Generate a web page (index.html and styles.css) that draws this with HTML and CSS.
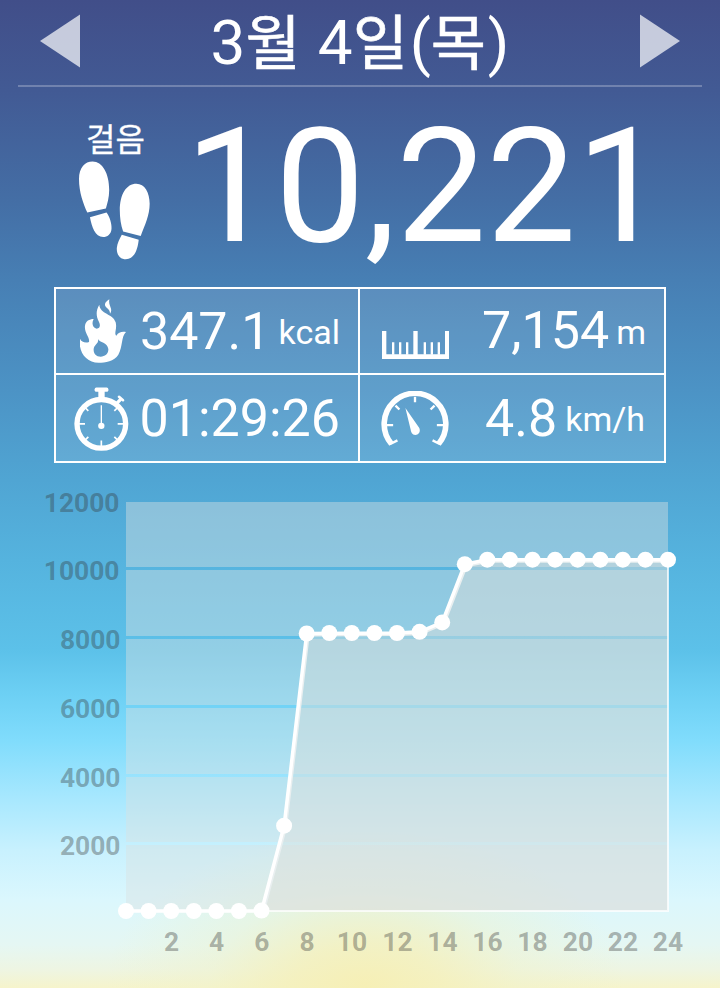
FILE: index.html
```
<!DOCTYPE html>
<html lang="ko">
<head>
  <meta charset="UTF-8">
  <meta name="viewport" content="width=device-width, initial-scale=1.0">
  <title>만보기</title>
  <link rel="stylesheet" href="styles.css">
</head>
<body>
  <div class="header">
    <svg class="arrow" viewBox="0 0 40 54"><path d="M40 0.5 L0 27 L40 53.5 Z"/></svg>
    <h1>3<span>월</span> 4<span>일</span>(<span>목</span>)</h1>
    <svg class="arrow" viewBox="0 0 40 54"><path d="M0 0.5 L40 27 L0 53.5 Z"/></svg>
  </div>

  <div class="steps">
    <div class="steps-label">
      <span>걸음</span>
      <svg class="feet" viewBox="57 152 214 296">
        <path d="M98 152 C127 152 148 187 148 238 C148 262 142 280 138 294 L82 306 C70 280 57 245 57 205 C57 170 75 152 98 152 Z"/>
        <path d="M90 320 L140 306 C150 320 156 340 155 355 C154 372 142 380 130 380 C105 378 96 350 90 320 Z"/>
        <path d="M230 219 C255 219 270 245 270 280 C270 315 255 345 243 377 L190 363 C183 345 180 320 180 300 C180 250 200 219 230 219 Z"/>
        <path d="M186 373 L237 388 C234 414 226 446 198 447 C178 447 170 430 171 413 C172 398 180 385 186 373 Z"/>
      </svg>
    </div>
    <div class="steps-count">10,221</div>
  </div>

  <div class="stats">
    <div class="stat">
      <svg class="icon flame" viewBox="90 58 138 192">
        <path fill-rule="evenodd" d="M148 75 C149 103 190 102 197 128 C202 148 191 162 199 168 C206 158 214 155 228 157 C213 170 219 201 205 225 C193 245 165 249 146 249 C108 248 84 216 90 177 C94 187 106 191 117 187 C120 172 102 160 105 138 C107 124 118 118 131 118 C123 133 130 145 140 147 C150 147 152 137 147 127 C138 109 137 94 148 75 Z M144 178 C149 190 172 186 175 208 C176 223 165 231 152 231 C138 231 130 221 131 208 C132 195 147 192 144 178 Z"/>
        <path d="M178 59 C162 69 162 78 171 85 C177 90 180 95 180 102 C191 88 174 79 178 59 Z"/>
      </svg>
      <span class="value">347.1</span>
      <span class="unit">kcal</span>
    </div>
    <div class="stat">
      <svg class="icon ruler" viewBox="96 153 201 84">
        <path d="M96 153 H109 V223 H190 V153 H203 V223 H285 V153 H297 V237 H96 Z"/>
        <path d="M126 187 h7 v37 h-7 Z M147 187 h7 v37 h-7 Z M168 187 h7 v37 h-7 Z M221 187 h7 v37 h-7 Z M242 187 h7 v37 h-7 Z M263 187 h7 v37 h-7 Z"/>
      </svg>
      <span class="value">7,154</span>
      <span class="unit">m</span>
    </div>
    <div class="stat">
      <svg class="icon watch" viewBox="71 320 165 191">
        <circle class="stroke" cx="153" cy="430" r="73" stroke-width="16"/>
        <rect x="133" y="321" width="41" height="13" rx="5"/>
        <rect x="144" y="330" width="19" height="26"/>
        <path class="stroke" stroke-width="10" d="M198 370 L212 355"/>
        <path class="stroke" stroke-width="8" stroke-linecap="round" d="M206 349 L218 359"/>
        <path class="stroke" stroke-width="5" d="M86 430 h18 M202 430 h18 M153 480 v20 M192 391 l10 -10 M114 391 l-10 -10 M192 469 l10 10 M114 469 l-10 10"/>
        <path class="stroke" stroke-width="4" d="M153 374 V436"/>
        <circle cx="153" cy="436" r="9.5"/>
      </svg>
      <span class="value">01:29:26</span>
    </div>
    <div class="stat">
      <svg class="icon gauge" viewBox="95 333 204 166">
        <path class="stroke" stroke-width="17" d="M126 493 A93 93 0 1 1 268 493"/>
        <path class="stroke" stroke-width="7" d="M112 436 H131 M263 436 H282 M197 350 V367 M138 377 L150 389 M256 377 L244 389 M121 494 L144 482 M273 494 L250 482"/>
        <path d="M168 384 L210 445 C215 457 207 466 198 466 C188 465 185 457 184 450 Z"/>
      </svg>
      <span class="value">4.8</span>
      <span class="unit">km/h</span>
    </div>
  </div>

  <svg class="chart" viewBox="0 463 720 525">
    <g class="band">
      <rect x="126" y="502" width="542" height="65"/>
      <rect x="126" y="570" width="542" height="66"/>
      <rect x="126" y="639" width="542" height="66"/>
      <rect x="126" y="708" width="542" height="66"/>
      <rect x="126" y="777" width="542" height="65"/>
      <rect x="126" y="845" width="542" height="66"/>
    </g>

    <path class="area" d="M261.5 911 L284.1 825.7 L306.7 633.5 L397 633 L419.6 631.8 L442.2 622.4 L464.8 564.2 L487.3 559.7 H668 V911 Z"/>
    <path class="area-edge" d="M261.5 911 H668 V560"/>
    <path class="line-shadow" d="M261.5 911 L284.1 825.7 L306.7 633.5 L397 633 L419.6 631.8 L442.2 622.4 L464.8 564.2 L487.3 559.7 H668"/>
    <path class="line" d="M126 911 H261.5 L284.1 825.7 L306.7 633.5 L397 633 L419.6 631.8 L442.2 622.4 L464.8 564.2 L487.3 559.7 H668"/>

    <g class="dots">
      <circle cx="126" cy="911" r="8"/>
      <circle cx="148.6" cy="911" r="8"/>
      <circle cx="171.2" cy="911" r="8"/>
      <circle cx="193.8" cy="911" r="8"/>
      <circle cx="216.3" cy="911" r="8"/>
      <circle cx="238.9" cy="911" r="8"/>
      <circle cx="261.5" cy="910.6" r="8"/>
      <circle cx="284.1" cy="825.7" r="8"/>
      <circle cx="306.7" cy="633.5" r="8"/>
      <circle cx="329.3" cy="633" r="8"/>
      <circle cx="351.8" cy="633" r="8"/>
      <circle cx="374.4" cy="633" r="8"/>
      <circle cx="397" cy="633" r="8"/>
      <circle cx="419.6" cy="631.8" r="8"/>
      <circle cx="442.2" cy="622.4" r="8"/>
      <circle cx="464.8" cy="564.2" r="8"/>
      <circle cx="487.3" cy="559.7" r="8"/>
      <circle cx="509.9" cy="559.7" r="8"/>
      <circle cx="532.5" cy="559.7" r="8"/>
      <circle cx="555.1" cy="559.7" r="8"/>
      <circle cx="577.7" cy="559.7" r="8"/>
      <circle cx="600.3" cy="559.7" r="8"/>
      <circle cx="622.8" cy="559.7" r="8"/>
      <circle cx="645.4" cy="559.7" r="8"/>
      <circle cx="668" cy="559.7" r="8"/>
    </g>

    <g class="y-axis">
      <text x="119.5" y="512">12000</text>
      <text x="119.5" y="580">10000</text>
      <text x="120.5" y="649">8000</text>
      <text x="120.5" y="718">6000</text>
      <text x="120.5" y="787">4000</text>
      <text x="120.5" y="855">2000</text>
    </g>
    <g class="x-axis">
      <text x="171.5" y="951">2</text>
      <text x="216.7" y="951">4</text>
      <text x="261.8" y="951">6</text>
      <text x="307" y="951">8</text>
      <text x="352" y="951">10</text>
      <text x="397.5" y="951">12</text>
      <text x="442.5" y="951">14</text>
      <text x="487.5" y="951">16</text>
      <text x="532.5" y="951">18</text>
      <text x="578" y="951">20</text>
      <text x="623" y="951">22</text>
      <text x="668" y="951">24</text>
    </g>
  </svg>
</body>
</html>
```
FILE: styles.css
```
* {
  box-sizing: border-box;
}

body {
  margin: 0;
  width: 720px;
  height: 988px;
  overflow: hidden;
  color: #fff;
  font-family: Roboto, "Noto Sans CJK KR", sans-serif;
  background:
    radial-gradient(ellipse 260px 160px at 365px 988px, rgba(246, 239, 180, 0.95) 0%, rgba(245, 240, 186, 0.8) 28%, rgba(240, 242, 200, 0.4) 60%, rgba(235, 245, 220, 0) 100%),
    linear-gradient(to bottom,
      #414e89 0px,
      #425a94 90px,
      #446ea5 200px,
      #477fb4 280px,
      #4c93c5 390px,
      #50a5d3 480px,
      #55b3de 560px,
      #5cc1e9 650px,
      #6dd0f4 695px,
      #80dcfc 740px,
      #a5e7fe 795px,
      #c8f1fe 850px,
      #dbf7fd 900px,
      #e5f7f3 945px,
      #eef5e2 970px,
      #f6f4cb 988px);
}

svg {
  display: block;
  fill: #fff;
}

.header {
  display: flex;
  justify-content: space-between;
  align-items: center;
  height: 87px;
  margin: 0 18px;
  padding: 0 22px;
  border-bottom: 2px solid rgba(255, 255, 255, 0.25);
}

.header h1 {
  margin: 0;
  font-size: 62px;
  font-weight: 400;
  line-height: 85px;
}

.header h1 span {
  font-size: 60px;
  letter-spacing: 1.8px;
  vertical-align: -1px;
  line-height: 1;
  -webkit-text-stroke: 0.6px #fff;
}

.arrow {
  width: 40px;
  height: 54px;
  margin-bottom: 4px;
  opacity: 0.7;
}

.steps {
  display: flex;
  height: 200px;
}

.steps-label {
  width: 106px;
  margin-left: 79px;
  padding-top: 32px;
}

.steps-label span {
  display: block;
  padding-left: 7px;
  font-size: 32px;
  line-height: 42px;
  -webkit-text-stroke: 0.3px #fff;
}

.feet {
  width: 71px;
  height: 99px;
}

.steps-count {
  font-size: 160px;
  line-height: 199px;
}

.stats {
  display: grid;
  grid-template-columns: 304px 304px;
  grid-template-rows: 86px 86px;
  width: 612px;
  margin-left: 54px;
  border: 2px solid #fff;
  background: rgba(255, 255, 255, 0.11);
  background-clip: padding-box;
}

.stat {
  display: flex;
  align-items: flex-start;
  padding-right: 18px;
}

.stat:nth-child(odd) {
  border-right: 2px solid #fff;
}

.stat:nth-child(-n+2) {
  border-bottom: 2px solid #fff;
}

.icon {
  margin-right: auto;
}

.icon .stroke {
  fill: none;
  stroke: #fff;
}

.flame {
  width: 46px;
  height: 64px;
  margin-top: 10px;
  margin-left: 24px;
}

.ruler {
  width: 67px;
  height: 28px;
  margin-top: 42px;
  margin-left: 22px;
}

.watch {
  width: 55px;
  height: 64px;
  margin-top: 12px;
  margin-left: 18px;
}

.gauge {
  width: 68px;
  height: 55px;
  margin-top: 16px;
  margin-left: 21px;
}

.value {
  font-size: 52px;
  line-height: 84px;
}

.unit {
  margin-left: 8px;
  font-size: 34px;
  line-height: 86px;
}

.stat:first-child .value {
  line-height: 86px;
}

.stat:nth-child(2) .unit {
  margin-left: 7px;
}

.stat:nth-child(n+3) .value {
  line-height: 87px;
}

.stat:nth-child(n+3) .unit {
  line-height: 88px;
}

.stat:last-child {
  padding-right: 19px;
}

.chart {
  width: 720px;
  height: 525px;
}

.band {
  fill: rgba(218, 224, 226, 0.43);
}

.area {
  fill: rgba(220, 223, 219, 0.47);
}

.area-edge {
  fill: none;
  stroke: rgba(255, 255, 255, 0.75);
  stroke-width: 2;
}

.line-shadow {
  fill: none;
  stroke: #e9eff0;
  stroke-width: 3;
  transform: translate(1.5px, 1.5px);
}

.line {
  fill: none;
  stroke: #fff;
  stroke-width: 3.5;
  stroke-linejoin: round;
}

.y-axis,
.x-axis {
  fill: rgba(50, 50, 50, 0.37);
  font-size: 26.4px;
  font-weight: 700;
}

.y-axis {
  text-anchor: end;
}

.x-axis {
  text-anchor: middle;
}
```
